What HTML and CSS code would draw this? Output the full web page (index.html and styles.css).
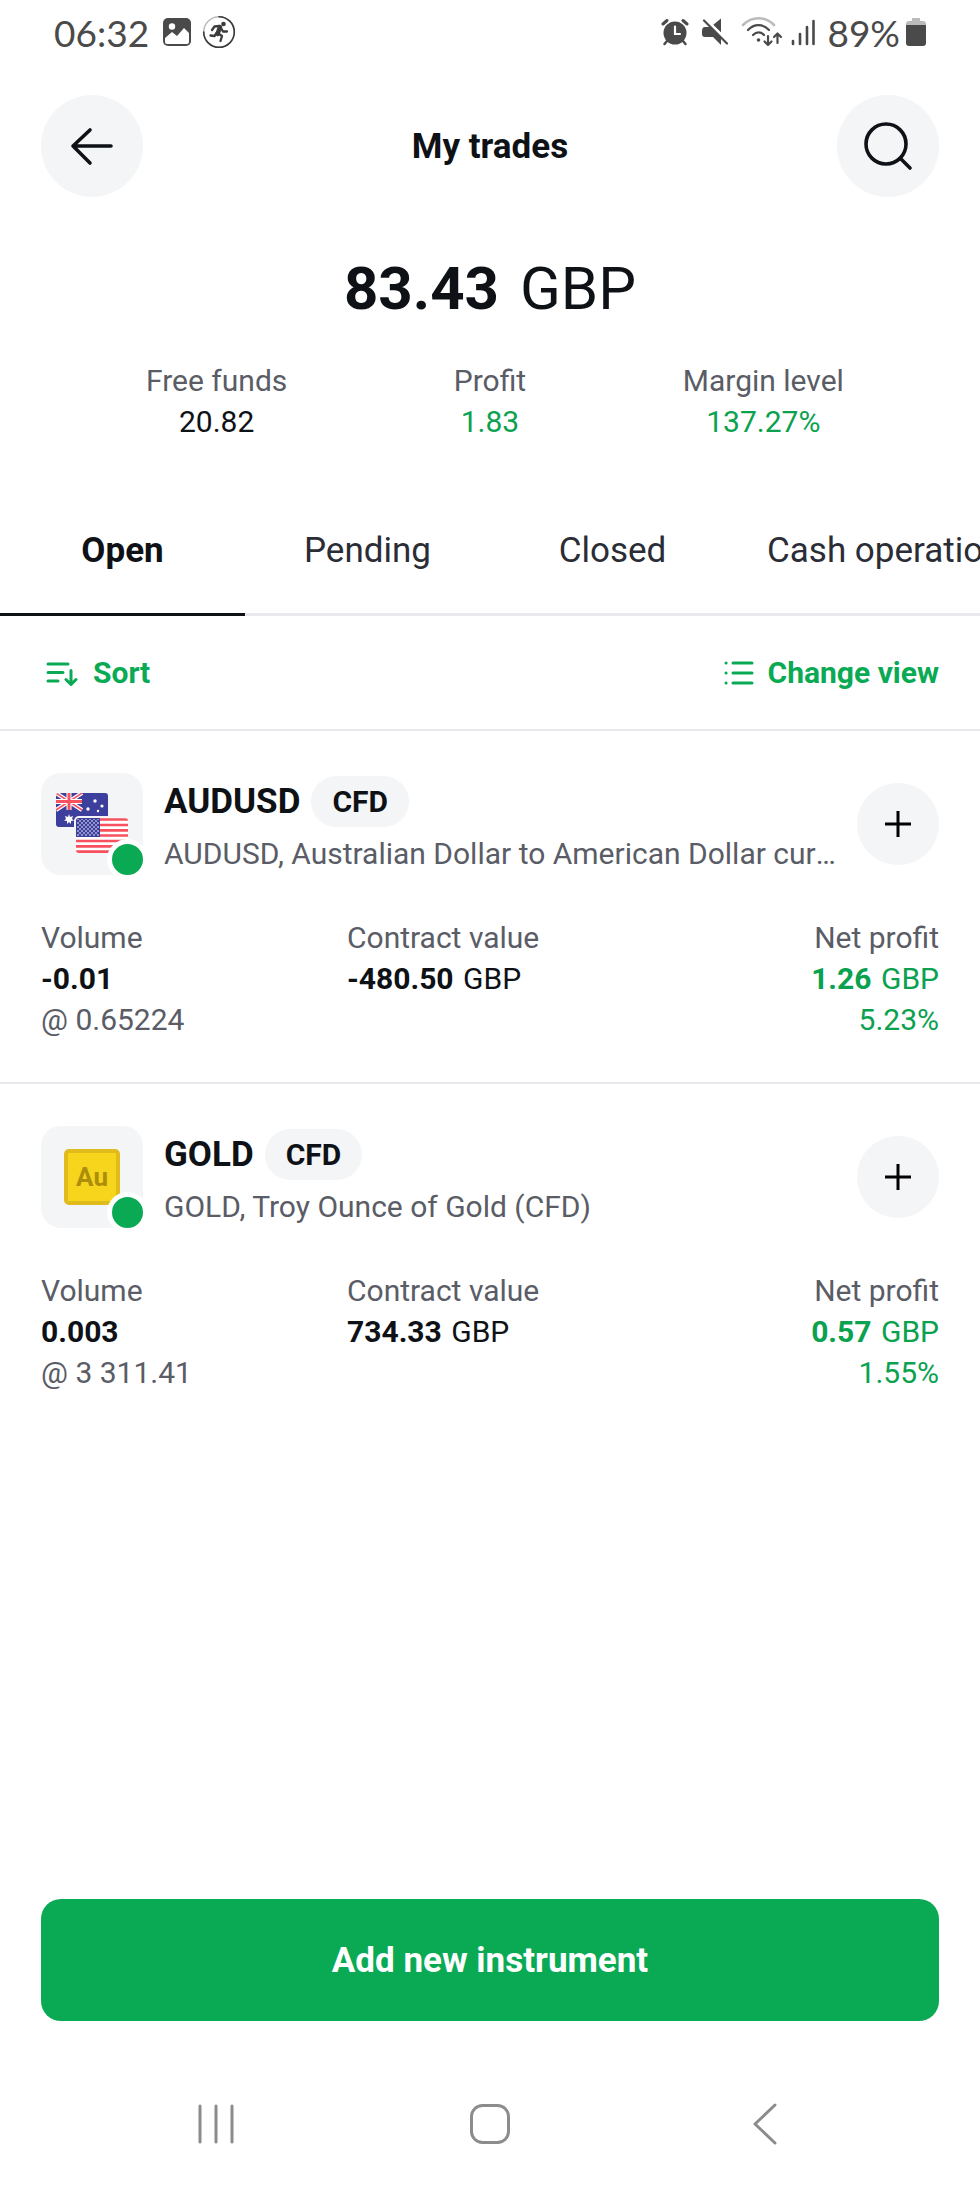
FILE: index.html
```html
<!DOCTYPE html>
<html lang="en">
<head>
<meta charset="UTF-8">
<meta name="viewport" content="width=device-width, initial-scale=1">
<title>My trades</title>
<link rel="stylesheet" href="styles.css">
</head>
<body>

<div class="status-bar">
  <div class="status-left">
    <span class="time">06:32</span>
    <svg width="30" height="30" viewBox="0 0 30 30">
      <rect x="1" y="1" width="28" height="28" rx="5" fill="#4a4a4a"/>
      <circle cx="10" cy="9.500" r="3.200" fill="#fff"/>
      <path d="M3 21l7-6 5 4 7-8 5 5v9a2 2 0 0 1-2 2H5a2 2 0 0 1-2-2z" fill="#fff"/>
    </svg>
    <svg width="34" height="34" viewBox="0 0 34 34" fill="none" stroke="#3c3c3c" stroke-linecap="round" stroke-linejoin="round">
      <circle cx="17" cy="17" r="15.300" stroke="#bbb" stroke-width="1.500"/>
      <path d="M17 1.700A15.300 15.300 0 1 1 1.700 17" stroke-width="1.600"/>
      <circle cx="21.500" cy="9" r="2.300" fill="#3c3c3c" stroke="none"/>
      <path d="M18 12l-2.500 7" stroke-width="4.500"/>
      <path d="M17.500 11l-5 .5-2.500 3.500M19 13l2 3.500h4M17 19l3 2-1.500 5M14.500 18l-2 3-4-.5" stroke-width="2.300"/>
    </svg>
  </div>
  <div class="status-right">
    <svg width="28" height="28" viewBox="0 0 28 28" fill="none" stroke="#4a4a4a" stroke-linecap="round">
      <circle cx="14" cy="15" r="11.500" fill="#4a4a4a" stroke="none"/>
      <path d="M2 6l4-3.500M26 6l-4-3.500" stroke-width="3"/>
      <path d="M6 23l-2.500 3M22 23l2.500 3" stroke-width="2.500"/>
      <path d="M14 8.500V16h5" stroke="#fff" stroke-width="2.200"/>
    </svg>
    <svg width="28" height="28" viewBox="0 0 28 28">
      <path d="M20 .5v14L12 7zM1 13c0-2.500 1-4 3-4h6l10 10v8l-8-8H4c-2 0-3-1-3-3z" fill="#4a4a4a"/>
      <path d="M5 1l23 23" stroke="#fff" stroke-width="2"/>
      <path d="M3 2.500l23 23" stroke="#4a4a4a" stroke-width="2.200" stroke-linecap="round"/>
    </svg>
    <svg width="42" height="32" viewBox="0 0 42 32" fill="none" stroke="#4a4a4a" stroke-width="2.200" stroke-linecap="round" stroke-linejoin="round">
      <path d="M2 9c9-9 22-9 31 0" stroke="#bbb" stroke-width="2.600"/>
      <path d="M7 14c6-6.500 15-6.500 21 0M12 19c3.500-3.500 8-3.500 11 0"/>
      <circle cx="17.500" cy="24" r="1.800" fill="#4a4a4a" stroke="none"/>
      <path d="M27 20v9m-3.500-3.500L27 29l3.500-3.500M36.500 27v-9.500M33 21l3.500-3.500L40 21"/>
    </svg>
    <svg class="signal" width="24" height="28" viewBox="0 0 24 28" stroke="#4a4a4a" stroke-width="2.600" stroke-linecap="round">
      <path d="M2 23v3M9 16v10M16 9v17M22.500 3v23"/>
    </svg>
    <span class="battery-level">89%</span>
    <svg width="20" height="28" viewBox="0 0 20 28">
      <path d="M6 0h8v3h3a3 3 0 0 1 3 3v3H0V6a3 3 0 0 1 3-3h3z" fill="#bbb"/>
      <path d="M0 7h20v18a3 3 0 0 1-3 3H3a3 3 0 0 1-3-3z" fill="#4a4a4a"/>
    </svg>
  </div>
</div>

<header class="header">
  <button class="round-btn" aria-label="Back">
    <svg width="44" height="44" viewBox="0 0 44 44" fill="none" stroke="#0e1216" stroke-width="3.600" stroke-linecap="round" stroke-linejoin="round">
      <path d="M41 22H3M20 6L3 22l17 17"/>
    </svg>
  </button>
  <h1>My trades</h1>
  <button class="round-btn" aria-label="Search">
    <svg width="52" height="52" viewBox="0 0 52 52" fill="none" stroke="#0e1216" stroke-width="3.600" stroke-linecap="round">
      <circle cx="24" cy="24" r="20"/>
      <path d="M38.500 38.500L48 48"/>
    </svg>
  </button>
</header>

<main>
  <p class="balance"><b>83.43</b> GBP</p>

  <dl class="stats">
    <div><dt>Free funds</dt><dd>20.82</dd></div>
    <div><dt>Profit</dt><dd class="green">1.83</dd></div>
    <div><dt>Margin level</dt><dd class="green">137.27%</dd></div>
  </dl>

  <nav class="tabs">
    <a href="#open" class="tab active">Open</a>
    <a href="#pending" class="tab">Pending</a>
    <a href="#closed" class="tab">Closed</a>
    <a href="#cash" class="tab">Cash operations</a>
  </nav>

  <div class="toolbar">
    <button class="tool-btn sort">
      <svg width="34" height="26" viewBox="0 0 34 26" fill="none" stroke="#0aaa55" stroke-width="3" stroke-linecap="round" stroke-linejoin="round">
        <path d="M3 4h20M3 12.500h15M3 21h10M26 10.500v14M21 19.500l5 5 5-5"/>
      </svg>
      Sort
    </button>
    <button class="tool-btn">
      <svg width="30" height="26" viewBox="0 0 30 26" fill="none" stroke="#0aaa55" stroke-width="3" stroke-linecap="round">
        <path d="M9 3h19M9 13h19M9 23h19M2 3h.1M2 13h.1M2 23h.1"/>
      </svg>
      Change view
    </button>
  </div>

  <section class="trade">
    <div class="trade-head">
      <div class="tile">
        <svg width="74" height="64" viewBox="0 0 74 64">
          <defs>
            <clipPath id="au"><rect x="1" y="1" width="52" height="34" rx="3"/></clipPath>
            <clipPath id="us"><rect x="21" y="26" width="52" height="35" rx="3"/></clipPath>
            <pattern id="stars" width="4" height="4" patternUnits="userSpaceOnUse">
              <circle cx="1" cy="1" r=".8" fill="#fff"/>
              <circle cx="3" cy="3" r=".8" fill="#fff"/>
            </pattern>
          </defs>
          <g clip-path="url(#au)">
            <rect x="1" y="1" width="52" height="34" fill="#3c3f9c"/>
            <path d="M1 1l26 17M27 1L1 18" stroke="#fff" stroke-width="4"/>
            <path d="M1 1l26 17M27 1L1 18" stroke="#f8505f" stroke-width="1.500"/>
            <path d="M14 1v17M1 9.500h26" stroke="#fff" stroke-width="5"/>
            <path d="M14 1v17M1 9.500h26" stroke="#f8505f" stroke-width="3"/>
            <path d="M14 22l1 3 3-1-1 3 2 1.500-3 .5v3l-2-2-2 2v-3l-3-.5 2-1.500-1-3 3 1z" fill="#fff"/>
            <g fill="#fff"><circle cx="40" cy="9" r="1.700"/><circle cx="33" cy="17" r="1.700"/><circle cx="47" cy="14" r="1.600"/><circle cx="43" cy="19" r="1.200"/></g>
          </g>
          <rect x="19" y="24" width="56" height="39" rx="5" fill="#f4f5f7"/>
          <g clip-path="url(#us)">
            <rect x="21" y="26" width="52" height="35" fill="#fff"/>
            <path d="M21 27.500h52M21 33h52M21 38.300h52M21 43.500h52M21 49h52M21 54.300h52M21 59.700h52" stroke="#f8505f" stroke-width="2.700"/>
            <rect x="21" y="26" width="24" height="19" fill="#3c3f9c"/>
            <rect x="22" y="27" width="22" height="17" fill="url(#stars)"/>
          </g>
        </svg>
        <span class="dot"></span>
      </div>
      <div class="trade-name">
        <h2>AUDUSD <span class="tag">CFD</span></h2>
        <p>AUDUSD, Australian Dollar to American Dollar currency pair</p>
      </div>
      <button class="add-btn" aria-label="Add AUDUSD">
        <svg width="28" height="28" viewBox="0 0 28 28" stroke="#000" stroke-width="3"><path d="M14 1v26M1 14h26"/></svg>
      </button>
    </div>
    <dl class="details">
      <div><dt>Volume</dt><dd><b>-0.01</b></dd><dd class="muted">@ 0.65224</dd></div>
      <div><dt>Contract value</dt><dd><b>-480.50</b> GBP</dd></div>
      <div class="right"><dt>Net profit</dt><dd class="green"><b>1.26</b> GBP</dd><dd class="green">5.23%</dd></div>
    </dl>
  </section>

  <section class="trade">
    <div class="trade-head">
      <div class="tile">
        <span class="gold">Au</span>
        <span class="dot"></span>
      </div>
      <div class="trade-name">
        <h2>GOLD <span class="tag">CFD</span></h2>
        <p>GOLD, Troy Ounce of Gold (CFD)</p>
      </div>
      <button class="add-btn" aria-label="Add GOLD">
        <svg width="28" height="28" viewBox="0 0 28 28" stroke="#000" stroke-width="3"><path d="M14 1v26M1 14h26"/></svg>
      </button>
    </div>
    <dl class="details">
      <div><dt>Volume</dt><dd><b>0.003</b></dd><dd class="muted">@ 3 311.41</dd></div>
      <div><dt>Contract value</dt><dd><b>734.33</b> GBP</dd></div>
      <div class="right"><dt>Net profit</dt><dd class="green"><b>0.57</b> GBP</dd><dd class="green">1.55%</dd></div>
    </dl>
  </section>
</main>

<button class="primary-btn">Add new instrument</button>

<div class="nav-bar">
  <button aria-label="Recent apps">
    <svg width="42" height="42" viewBox="0 0 42 42" stroke="#8c8c8c" stroke-width="3" stroke-linecap="round"><path d="M4 3v36M20 3v36M36 3v36"/></svg>
  </button>
  <button aria-label="Home">
    <svg width="42" height="42" viewBox="0 0 42 42" fill="none" stroke="#8c8c8c" stroke-width="3"><rect x="2.500" y="2.500" width="37" height="37" rx="11"/></svg>
  </button>
  <button aria-label="Back">
    <svg width="42" height="42" viewBox="0 0 42 42" fill="none" stroke="#8c8c8c" stroke-width="3" stroke-linecap="round" stroke-linejoin="round"><path d="M33 2L13 21l20 19"/></svg>
  </button>
</div>

</body>
</html>
```
FILE: styles.css
```css
* { box-sizing: border-box; }
body {
  font-family: Roboto, sans-serif;
  font-size: 30px;
  line-height: 41px;
  background-color: #fff;
  color: #0e1216;
  margin: 0;
  min-height: 100vh;
  display: flex;
  flex-direction: column;
}
h1, h2, p, dl, dd { margin: 0; }
svg { display: block; flex: none; }
button {
  font: inherit;
  color: inherit;
  border: none;
  background: none;
  padding: 0;
  cursor: pointer;
}
.green { color: #0aa14f; }

/* phone status bar */
.status-bar {
  display: flex;
  justify-content: space-between;
  height: 64px;
  padding: 0 54px;
  font-family: Lato, sans-serif;
  font-size: 37px;
  color: #4a4a4a;
}
.status-left, .status-right { display: flex; align-items: center; }
.status-left { gap: 10px; }
.time { margin-right: 3px; }
.status-right { gap: 12px; }
.signal { margin-left: -4px; }
.battery-level { margin-right: -6px; }

.header {
  display: flex;
  justify-content: space-between;
  align-items: center;
  padding: 31px 41px 0;
}
h1 { font-size: 35px; font-weight: 700; }
.round-btn, .add-btn {
  display: flex;
  align-items: center;
  justify-content: center;
  flex: none;
  width: 102px;
  height: 102px;
  border-radius: 50%;
  background-color: #f4f5f7;
}

main { flex: 1; }
.balance {
  margin-top: 56px;
  font-size: 60px;
  line-height: 72px;
  text-align: center;
}
.balance b { margin-right: 6px; }
.stats {
  display: grid;
  grid-template-columns: repeat(3, 1fr);
  margin-top: 35px;
  padding: 0 80px;
  text-align: center;
}
dt, .muted { color: #5a5c66; }
dd b { margin-right: 2px; }

.tabs {
  display: flex;
  margin-top: 46px;
  overflow: hidden;
}
.tab {
  flex: none;
  min-width: 25%;
  padding: 42px 32px;
  border-bottom: 3px solid #e8e8ee;
  font-size: 35px;
  text-align: center;
  text-decoration: none;
  color: #2a2d36;
}
.tab.active {
  font-weight: 700;
  color: #0e1216;
  border-color: #0e1216;
}

.toolbar {
  display: flex;
  justify-content: space-between;
  padding: 36px 41px;
  border-bottom: 2px solid #e8e8ec;
}
.tool-btn {
  display: flex;
  align-items: center;
  gap: 14px;
  font-weight: 700;
  color: #0aaa55;
}
.sort { padding-left: 4px; }

.trade { padding: 42px 41px; }
.trade + .trade { border-top: 2px solid #e8e8ec; }
.trade-head { display: flex; align-items: center; }
.tile {
  position: relative;
  display: flex;
  align-items: center;
  justify-content: center;
  flex: none;
  width: 102px;
  height: 102px;
  border-radius: 20px;
  background-color: #f4f5f7;
}
.dot {
  position: absolute;
  right: -5px;
  bottom: -5px;
  width: 41px;
  height: 41px;
  border: 5px solid #fff;
  border-radius: 50%;
  background-color: #0aaa55;
}
.gold {
  width: 56px;
  height: 56px;
  border: 4px solid #dfbb1b;
  border-radius: 5px;
  background-color: #f7d51d;
  color: #ac8e0a;
  font-size: 26px;
  font-weight: 700;
  line-height: 48px;
  text-align: center;
}
.trade-name {
  flex: 1;
  min-width: 0;
  padding: 2px 14px 0 21px;
}
h2 {
  display: flex;
  align-items: center;
  gap: 11px;
  font-size: 35px;
  font-weight: 700;
}
.tag {
  padding: 5px 21px;
  border-radius: 26px;
  background-color: #f4f5f7;
  font-size: 30px;
}
.trade-name p {
  margin-top: 6px;
  color: #5a5c66;
  white-space: nowrap;
  overflow: hidden;
  text-overflow: ellipsis;
}
.add-btn { width: 82px; height: 82px; }
.details {
  display: grid;
  grid-template-columns: repeat(3, 1fr);
  gap: 20px;
  margin-top: 42px;
}
.right { text-align: right; }

.primary-btn {
  margin: 0 41px;
  height: 122px;
  border-radius: 20px;
  background-color: #0aaa55;
  color: #fff;
  font-size: 35px;
  font-weight: 700;
}
.nav-bar {
  display: grid;
  grid-template-columns: repeat(3, 1fr);
  height: 122px;
  margin-top: 42px;
  padding: 0 80px;
}
.nav-bar button {
  display: flex;
  align-items: center;
  justify-content: center;
}
```
